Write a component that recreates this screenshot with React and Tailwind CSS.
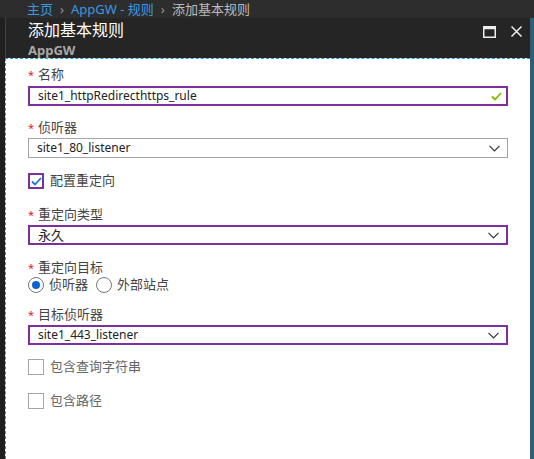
import { useState } from 'react'

const FONT = { fontFamily: '"Noto Sans", "Noto Sans CJK SC", sans-serif' }

function Chevron() {
  return (
    <svg width="11" height="7" viewBox="0 0 11 7" className="text-[#333]">
      <path d="M0.5 0.8 L5.5 5.8 L10.5 0.8" fill="none" stroke="currentColor" strokeWidth="1.2" />
    </svg>
  )
}

function Label({ children, required = true, className = '' }) {
  return (
    <div className={`flex items-center h-[18px] text-[13px] text-[#444] ${className}`}>
      {required && <span className="text-[#e0202e] text-[11px] w-[10px] leading-none -mt-[2px]">*</span>}
      <span>{children}</span>
    </div>
  )
}

function Select({ value, purple, latin = true, className = '' }) {
  return (
    <div
      className={`h-[20px] flex items-center justify-between pl-[8px] pr-[7px] text-[#222] ${
        latin ? 'text-[12px]' : 'text-[13px]'
      } ${purple ? 'border-2 border-[#7e2f9e]' : 'border border-[#a6a6a6]'} ${className}`}
    >
      <span className="leading-none">{value}</span>
      <Chevron />
    </div>
  )
}

function Checkbox({ checked, purple, label, className = '' }) {
  return (
    <div className={`flex items-center h-[16px] ${className}`}>
      <div
        className={`w-[16px] h-[16px] flex items-center justify-center ${
          purple ? 'border-2 border-[#7e2f9e]' : 'border border-[#a6a6a6]'
        }`}
      >
        {checked && (
          <svg width="11" height="9" viewBox="0 0 11 9">
            <path d="M1 4.5 L4 7.5 L10 1" fill="none" stroke="#1f6fd6" strokeWidth="1.8" />
          </svg>
        )}
      </div>
      <span className={`ml-[6px] text-[13px] ${checked ? 'text-[#444]' : 'text-[#666]'}`}>{label}</span>
    </div>
  )
}

function Radio({ selected, label, onClick }) {
  return (
    <button type="button" onClick={onClick} className="flex items-center h-[16px]">
      <span className="w-[16px] h-[16px] rounded-full border border-[#777] flex items-center justify-center">
        {selected && <span className="w-[8px] h-[8px] rounded-full bg-[#0f62d4]" />}
      </span>
      <span className="ml-[5px] text-[13px] text-[#444]">{label}</span>
    </button>
  )
}

export default function App() {
  const [target, setTarget] = useState('listener')

  return (
    <div className="w-[534px] h-[459px] flex flex-col overflow-hidden bg-[#252525]" style={FONT}>
      {/* breadcrumb */}
      <div className="h-[18px] bg-[#2d2d2d] flex items-end pl-[27px] text-[13px] leading-[17px] gap-[7px]">
        <span className="text-[#3c98e0]">主页</span>
        <span className="text-[#999]">›</span>
        <span className="text-[#3c98e0]">AppGW - 规则</span>
        <span className="text-[#999]">›</span>
        <span className="text-[#bbbbbb]">添加基本规则</span>
      </div>

      <div className="flex-1 flex">
        <div className="w-[5px] bg-[#1f1f1f]" />

        <div className="flex-1 flex flex-col">
          {/* blade header */}
          <div className="h-[40px] border-l border-[#444] flex justify-between">
            <div className="pl-[22px] pt-[2px]">
              <div className="text-[16px] leading-[20px] text-white">添加基本规则</div>
              <div className="mt-[3px] text-[13px] leading-[14px] font-bold text-[#a8a8a8]">AppGW</div>
            </div>
            <div className="flex items-start pt-[8px] pr-[8px] gap-[15px]">
              <svg width="13" height="12" viewBox="0 0 13 12">
                <rect x="0.75" y="0.75" width="11.5" height="10.5" fill="none" stroke="#eee" strokeWidth="1.5" />
                <rect x="0.75" y="0.75" width="11.5" height="2.5" fill="#eee" />
              </svg>
              <svg width="11" height="11" viewBox="0 0 11 11">
                <path d="M0.5 0.5 L10.5 10.5 M10.5 0.5 L0.5 10.5" stroke="#eee" strokeWidth="1.5" />
              </svg>
            </div>
          </div>

          {/* form */}
          <div className="flex-1 bg-white border-l border-t border-dashed border-[#1ba1e2] pl-[22px] pr-[22px]">
            <Label className="mt-[7px]">名称</Label>
            <div className="mt-[2px] h-[20px] border-2 border-[#7e2f9e] flex items-center justify-between pl-[8px] pr-[4px] text-[12px] text-[#222]">
              <span className="leading-none">site1_httpRedirecthttps_rule</span>
              <svg width="11" height="9" viewBox="0 0 11 9">
                <path d="M1 4.5 L4 7.5 L10 1" fill="none" stroke="#7fba00" strokeWidth="1.8" />
              </svg>
            </div>

            <Label className="mt-[13px]">侦听器</Label>
            <Select className="mt-[1px]" value="site1_80_listener" />

            <Checkbox className="mt-[15px]" checked purple label="配置重定向" />

            <Label className="mt-[17px]">重定向类型</Label>
            <Select className="mt-[1px]" value="永久" latin={false} purple />

            <Label className="mt-[14px]">重定向目标</Label>
            <div className="flex gap-[8px]">
              <Radio selected={target === 'listener'} label="侦听器" onClick={() => setTarget('listener')} />
              <Radio selected={target === 'external'} label="外部站点" onClick={() => setTarget('external')} />
            </div>

            <Label className="mt-[13px]">目标侦听器</Label>
            <Select className="mt-[1px]" value="site1_443_listener" purple />

            <Checkbox className="mt-[14px]" label="包含查询字符串" />
            <Checkbox className="mt-[18px]" label="包含路径" />
          </div>
        </div>

        <div className="w-[4px] bg-[#2e5e7d]" />
      </div>
    </div>
  )
}
